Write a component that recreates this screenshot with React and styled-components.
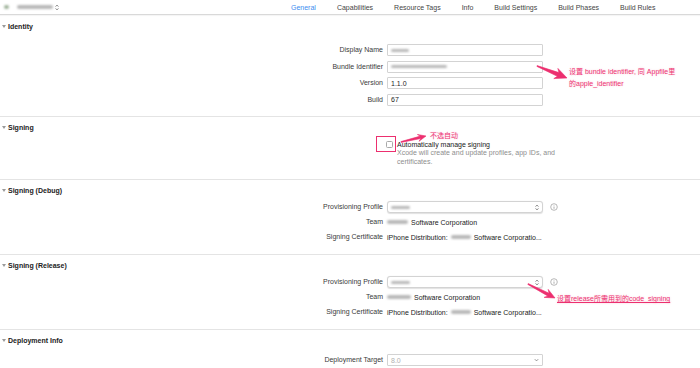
import React from 'react'
import styled, { createGlobalStyle } from 'styled-components'

const PINK = '#ec2f6f'

const GlobalStyle = createGlobalStyle`
  html, body { margin: 0; padding: 0; background: #fff; }
  body {
    font-family: "Liberation Sans", "Noto Sans CJK SC", sans-serif;
    font-size: 7px;
    color: #333;
  }
`

const Page = styled.div`
  position: relative;
  width: 700px;
  height: 368px;
  overflow: hidden;
`

const TopBar = styled.div`
  display: flex;
  align-items: center;
  height: 14px;
  border-bottom: 1px solid #d9d9d9;
  box-shadow: 0 1px 1px rgba(0, 0, 0, 0.04);
`

const Target = styled.div`
  display: flex;
  align-items: center;
  flex: none;
  width: 291px;
  padding-left: 4px;
  box-sizing: border-box;
`

const Blur = styled.span`
  display: inline-block;
  flex: none;
  width: ${p => p.$w}px;
  height: ${p => p.$h || 4}px;
  margin-left: ${p => p.$ml || 0}px;
  margin-right: ${p => p.$mr || 0}px;
  background: ${p => p.$c || '#b9b9b9'};
  filter: blur(0.9px);
  border-radius: 2px;
`

const Tabs = styled.div`
  display: flex;
  gap: 21px;
`

const Tab = styled.span`
  white-space: nowrap;
  color: ${p => (p.$active ? '#3d8ef0' : '#444')};
`

const Section = styled.section`
  padding: ${p => p.$pt || 5}px 0 ${p => p.$pb}px;
  border-bottom: 1px solid #e4e4e4;
`

const Header = styled.div`
  display: flex;
  align-items: center;
  height: 10px;
  font-weight: bold;
  color: #222;
`

const Caret = styled.span`
  width: 0;
  height: 0;
  margin: 0 2px 0 2px;
  border-left: 2px solid transparent;
  border-right: 2px solid transparent;
  border-top: 3px solid #9a9a9a;
`

const Form = styled.div`
  display: grid;
  grid-template-columns: 383px 156px auto;
  column-gap: 4px;
  row-gap: ${p => p.$gap || 3}px;
  margin-top: ${p => p.$top}px;
  align-items: center;
`

const Label = styled.div`
  grid-column: 1;
  text-align: right;
  white-space: nowrap;
  color: #3a3a3a;
  line-height: 12px;
`

const Field = styled.div`
  grid-column: 2;
  display: flex;
  align-items: center;
  justify-content: space-between;
  height: 12px;
  box-sizing: border-box;
  padding: 0 3px;
  border: 1px solid #d3d3d3;
  border-radius: ${p => (p.$popup ? 3 : 1)}px;
  box-shadow: ${p => (p.$popup ? '0 0.5px 1px rgba(0,0,0,0.12)' : 'none')};
  color: ${p => (p.$muted ? '#b0b0b0' : '#222')};
  background: #fff;
`

const Value = styled.div`
  grid-column: 2 / span 2;
  display: flex;
  align-items: center;
  height: 12px;
  white-space: nowrap;
  color: #222;
`

const Info = styled.div`
  grid-column: 3;
  display: flex;
  margin-left: 3px;
`

const CheckCell = styled.div`
  grid-column: 2 / span 2;
  margin-left: -1px;
`

const CheckRow = styled.div`
  display: flex;
  align-items: center;
  height: 10px;
  color: #222;
`

const Box = styled.span`
  width: 7px;
  height: 7px;
  box-sizing: border-box;
  margin-right: 4px;
  border: 1px solid #a9a9a9;
  border-radius: 1.5px;
  background: #fff;
`

const Note = styled.div`
  padding-left: 11px;
  line-height: 8.5px;
  color: #8e8e8e;
`

const Remark = styled.div`
  position: absolute;
  left: ${p => p.$x}px;
  top: ${p => p.$y}px;
  line-height: 12px;
  white-space: nowrap;
  color: ${PINK};
  text-shadow: 0 0 1px #fff, 0 0 2px rgba(236, 47, 111, 0.25);
  text-decoration: ${p => (p.$under ? 'underline' : 'none')};
`

const Highlight = styled.div`
  position: absolute;
  left: 376px;
  top: 136px;
  width: 20px;
  height: 16px;
  box-sizing: border-box;
  border: 1.5px solid ${PINK};
`

const Overlay = styled.svg`
  position: absolute;
  left: 0;
  top: 0;
  pointer-events: none;
`

const UpDown = () => (
  <svg width="4" height="7" viewBox="0 0 4 7">
    <path d="M0.6 2.6 L2 1.1 L3.4 2.6 M0.6 4.4 L2 5.9 L3.4 4.4" fill="none" stroke="#666" strokeWidth="0.8" />
  </svg>
)

const Down = () => (
  <svg width="5" height="4" viewBox="0 0 5 4">
    <path d="M0.8 1.2 L2.5 2.9 L4.2 1.2" fill="none" stroke="#777" strokeWidth="0.8" />
  </svg>
)

const InfoIcon = () => (
  <svg width="8" height="8" viewBox="0 0 8 8">
    <circle cx="4" cy="4" r="3.3" fill="none" stroke="#9a9a9a" strokeWidth="0.7" />
    <path d="M4 3.5 V5.8" stroke="#9a9a9a" strokeWidth="0.8" />
    <circle cx="4" cy="2.4" r="0.45" fill="#9a9a9a" />
  </svg>
)

function arrow(x1, y1, x2, y2, head, headW, neck) {
  const len = Math.hypot(x2 - x1, y2 - y1)
  const ux = (x2 - x1) / len
  const uy = (y2 - y1) / len
  const nx = -uy
  const ny = ux
  const bx = x2 - ux * head
  const by = y2 - uy * head
  const sx = bx + ux * 2.5
  const sy = by + uy * 2.5
  const pts = [
    [x1 + nx * 0.4, y1 + ny * 0.4],
    [sx + nx * neck / 2, sy + ny * neck / 2],
    [bx + nx * headW / 2, by + ny * headW / 2],
    [x2, y2],
    [bx - nx * headW / 2, by - ny * headW / 2],
    [sx - nx * neck / 2, sy - ny * neck / 2],
    [x1 - nx * 0.4, y1 - ny * 0.4],
  ]
  return pts.map(p => p.map(v => v.toFixed(1)).join(',')).join(' ')
}

const arrows = [
  [537, 66, 567, 78, 12, 11, 4],
  [401, 142, 426, 136, 8, 7, 2.5],
  [528, 284, 555, 298, 10, 9, 3],
]

const tabs = ['General', 'Capabilities', 'Resource Tags', 'Info', 'Build Settings', 'Build Phases', 'Build Rules']

const Team = ({ w }) => (
  <Value>
    <Blur $w={w} $mr={3} />
    Software Corporation
  </Value>
)

const Cert = () => (
  <Value>
    iPhone Distribution:
    <Blur $w={20} $ml={3} $mr={3} />
    Software Corporatio...
  </Value>
)

const Profile = () => (
  <>
    <Label>Provisioning Profile</Label>
    <Field $popup>
      <Blur $w={19} $h={3} />
      <UpDown />
    </Field>
    <Info><InfoIcon /></Info>
  </>
)

export default function App() {
  return (
    <Page>
      <GlobalStyle />
      <TopBar>
        <Target>
          <Blur $w={5} $h={4} $c="#9fb39a" $mr={8} />
          <Blur $w={36} $h={4} $mr={2} />
          <UpDown />
        </Target>
        <Tabs>
          {tabs.map((t, i) => (
            <Tab key={t} $active={i === 0}>{t}</Tab>
          ))}
        </Tabs>
      </TopBar>

      <Section $pt={6} $pb={10.5}>
        <Header><Caret />Identity</Header>
        <Form $top={13} $gap={4.5}>
          <Label>Display Name</Label>
          <Field><Blur $w={18} $h={3} /></Field>
          <Label>Bundle Identifier</Label>
          <Field><Blur $w={56} $h={3} /></Field>
          <Label>Version</Label>
          <Field>1.1.0</Field>
          <Label>Build</Label>
          <Field>67</Field>
        </Form>
      </Section>

      <Section $pb={13}>
        <Header><Caret />Signing</Header>
        <Form $top={7}>
          <CheckCell>
            <CheckRow><Box />Automatically manage signing</CheckRow>
            <Note>
              Xcode will create and update profiles, app IDs, and<br />
              certificates.
            </Note>
          </CheckCell>
        </Form>
      </Section>

      <Section $pb={11}>
        <Header><Caret />Signing (Debug)</Header>
        <Form $top={6}>
          <Profile />
          <Label>Team</Label>
          <Team w={21} />
          <Label>Signing Certificate</Label>
          <Cert />
        </Form>
      </Section>

      <Section $pb={11}>
        <Header><Caret />Signing (Release)</Header>
        <Form $top={6}>
          <Profile />
          <Label>Team</Label>
          <Team w={24} />
          <Label>Signing Certificate</Label>
          <Cert />
        </Form>
      </Section>

      <Section $pb={10}>
        <Header><Caret />Deployment Info</Header>
        <Form $top={9}>
          <Label>Deployment Target</Label>
          <Field $muted>
            8.0
            <Down />
          </Field>
        </Form>
      </Section>

      <Highlight />
      <Overlay width="700" height="368">
        {arrows.map((a, i) => (
          <polygon key={i} points={arrow(...a)} fill={PINK} stroke={PINK} strokeWidth="0.6" strokeLinejoin="round" />
        ))}
      </Overlay>
      <Remark $x={569} $y={66}>
        设置 bundle identifier, 同 Appfile里<br />
        的apple_identifier
      </Remark>
      <Remark $x={430} $y={130}>不选自动</Remark>
      <Remark $x={557} $y={293} $under>设置release所需用到的code_signing</Remark>
    </Page>
  )
}
